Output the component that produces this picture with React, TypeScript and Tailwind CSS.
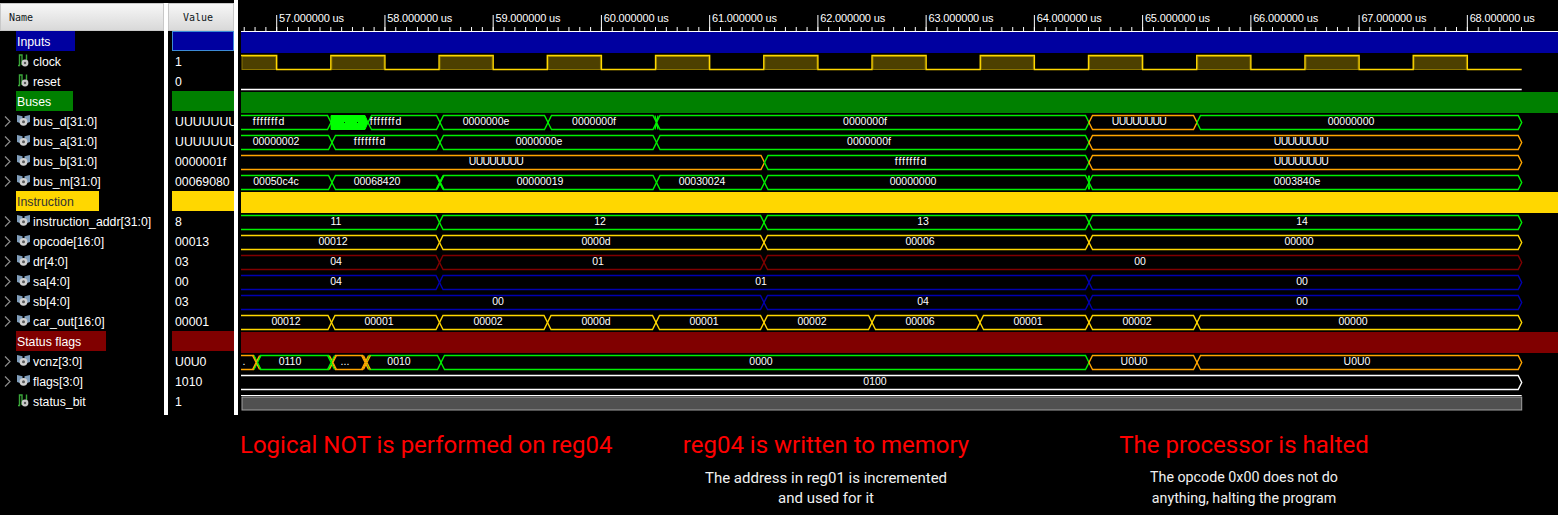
const GREEN = '#00f000';
const ORANGE = '#ffa500';
const GOLD = '#ffd700';
const DARKRED = '#800000';
const BLUE = '#0000b0';
const WHITE = '#ffffff';
const END = 1521.7;
const START = 241;

type Seg = { to: number; color: string; label: string; lx: number; fill?: boolean };
type Cross = { x: number; color: string; w?: number };
type Row =
  | { type: 'group'; name: string; bg: string; w: string; text: string; selected?: boolean }
  | { type: 'clock'; name: string; value: string }
  | { type: 'low'; name: string; value: string }
  | { type: 'bit'; name: string; value: string }
  | { type: 'bus'; name: string; value: string; segs: Seg[]; thick?: Cross[] };

const rows: Row[] = [
  { type: 'group', name: 'Inputs', bg: 'bg-[#0000a0]', w: 'w-[59px]', text: 'text-white', selected: true },
  { type: 'clock', name: 'clock', value: '1' },
  { type: 'low', name: 'reset', value: '0' },
  { type: 'group', name: 'Buses', bg: 'bg-[#008000]', w: 'w-[57px]', text: 'text-white' },
  {
    type: 'bus', name: 'bus_d[31:0]', value: 'UUUUUUUU',
    segs: [
      { to: 331, color: GREEN, label: 'fffffffd', lx: 269 },
      { to: 368, color: GREEN, label: '', lx: 0, fill: true },
      { to: 440, color: GREEN, label: 'fffffffd', lx: 386 },
      { to: 548, color: GREEN, label: '0000000e', lx: 486 },
      { to: 656.5, color: GREEN, label: '0000000f', lx: 594 },
      { to: 1089, color: GREEN, label: '0000000f', lx: 865 },
      { to: 1197, color: ORANGE, label: 'UUUUUUUU', lx: 1139 },
      { to: END, color: GREEN, label: '00000000', lx: 1351 },
    ],
    thick: [{ x: 656.5, color: GREEN, w: 1.5 }],
  },
  {
    type: 'bus', name: 'bus_a[31:0]', value: 'UUUUUUUU',
    segs: [
      { to: 332, color: GREEN, label: '00000002', lx: 276 },
      { to: 440, color: GREEN, label: 'fffffffd', lx: 370 },
      { to: 656.5, color: GREEN, label: '0000000e', lx: 539 },
      { to: 1089, color: GREEN, label: '0000000f', lx: 869 },
      { to: END, color: ORANGE, label: 'UUUUUUUU', lx: 1301 },
    ],
  },
  {
    type: 'bus', name: 'bus_b[31:0]', value: '0000001f',
    segs: [
      { to: 764.5, color: ORANGE, label: 'UUUUUUUU', lx: 496 },
      { to: 1089, color: GREEN, label: 'fffffffd', lx: 911 },
      { to: END, color: ORANGE, label: 'UUUUUUUU', lx: 1301 },
    ],
  },
  {
    type: 'bus', name: 'bus_m[31:0]', value: '00069080',
    segs: [
      { to: 332, color: GREEN, label: '00050c4c', lx: 276 },
      { to: 440, color: GREEN, label: '00068420', lx: 377 },
      { to: 656.5, color: GREEN, label: '00000019', lx: 540 },
      { to: 764.5, color: GREEN, label: '00030024', lx: 702 },
      { to: 1089, color: GREEN, label: '00000000', lx: 913 },
      { to: END, color: GREEN, label: '0003840e', lx: 1297 },
    ],
    thick: [{ x: 439.5, color: GREEN }, { x: 440.5, color: GREEN }, { x: 1089, color: GREEN, w: 0.5 }],
  },
  { type: 'group', name: 'Instruction', bg: 'bg-[#ffd700]', w: 'w-[83px]', text: 'text-[#333333]' },
  {
    type: 'bus', name: 'instruction_addr[31:0]', value: '8',
    segs: [
      { to: 439.5, color: GREEN, label: '11', lx: 336 },
      { to: 764, color: GREEN, label: '12', lx: 600 },
      { to: 1089, color: GREEN, label: '13', lx: 923 },
      { to: END, color: GREEN, label: '14', lx: 1302 },
    ],
  },
  {
    type: 'bus', name: 'opcode[16:0]', value: '00013',
    segs: [
      { to: 439.5, color: GOLD, label: '00012', lx: 333 },
      { to: 764, color: GOLD, label: '0000d', lx: 596 },
      { to: 1089, color: GOLD, label: '00006', lx: 920 },
      { to: END, color: GOLD, label: '00000', lx: 1299 },
    ],
  },
  {
    type: 'bus', name: 'dr[4:0]', value: '03',
    segs: [
      { to: 439.5, color: DARKRED, label: '04', lx: 336 },
      { to: 764, color: DARKRED, label: '01', lx: 598 },
      { to: END, color: DARKRED, label: '00', lx: 1140 },
    ],
  },
  {
    type: 'bus', name: 'sa[4:0]', value: '00',
    segs: [
      { to: 439.5, color: BLUE, label: '04', lx: 336 },
      { to: 1089, color: BLUE, label: '01', lx: 761 },
      { to: END, color: BLUE, label: '00', lx: 1302 },
    ],
  },
  {
    type: 'bus', name: 'sb[4:0]', value: '03',
    segs: [
      { to: 764, color: BLUE, label: '00', lx: 498 },
      { to: 1089, color: BLUE, label: '04', lx: 923 },
      { to: END, color: BLUE, label: '00', lx: 1302 },
    ],
  },
  {
    type: 'bus', name: 'car_out[16:0]', value: '00001',
    segs: [
      { to: 331.5, color: GOLD, label: '00012', lx: 286 },
      { to: 439.5, color: GOLD, label: '00001', lx: 379 },
      { to: 547.5, color: GOLD, label: '00002', lx: 488 },
      { to: 656, color: GOLD, label: '0000d', lx: 596 },
      { to: 764, color: GOLD, label: '00001', lx: 704 },
      { to: 872, color: GOLD, label: '00002', lx: 812 },
      { to: 980, color: GOLD, label: '00006', lx: 920 },
      { to: 1089, color: GOLD, label: '00001', lx: 1028 },
      { to: 1197, color: GOLD, label: '00002', lx: 1137 },
      { to: END, color: GOLD, label: '00000', lx: 1353 },
    ],
  },
  { type: 'group', name: 'Status flags', bg: 'bg-[#800000]', w: 'w-[90px]', text: 'text-white' },
  {
    type: 'bus', name: 'vcnz[3:0]', value: 'U0U0',
    segs: [
      { to: 257, color: ORANGE, label: '.', lx: 244 },
      { to: 332, color: GREEN, label: '0110', lx: 290 },
      { to: 366, color: ORANGE, label: '...', lx: 345 },
      { to: 441, color: GREEN, label: '0010', lx: 399 },
      { to: 1089, color: GREEN, label: '0000', lx: 761 },
      { to: 1197, color: ORANGE, label: 'U0U0', lx: 1134 },
      { to: END, color: ORANGE, label: 'U0U0', lx: 1357 },
    ],
    thick: [
      { x: 257.5, color: GREEN }, { x: 256, color: ORANGE },
      { x: 333, color: ORANGE }, { x: 331, color: GREEN },
      { x: 367, color: ORANGE }, { x: 365, color: ORANGE },
    ],
  },
  {
    type: 'bus', name: 'flags[3:0]', value: '1010',
    segs: [{ to: END, color: WHITE, label: '0100', lx: 875 }],
  },
  { type: 'bit', name: 'status_bit', value: '1' },
];

const TOP = 4.5;
const BOT = 18.5;
const MID = 11.5;

function Chevron() {
  return (
    <svg width="7" height="11" viewBox="0 0 7 11" className="block">
      <path d="M1 0.5 L6 5.5 L1 10.5" fill="none" stroke="#8c8c8c" strokeWidth="1.2" />
    </svg>
  );
}

function BusIcon() {
  return (
    <svg width="13" height="11" viewBox="0 0 13 11" className="block">
      <path d="M0 0 L5.5 1.2 L5.5 5 L3 8 L0 7 Z" fill="#7f9dbb" />
      <path d="M13 0 L7.5 1.2 L7.5 5 L10 8 L13 7 Z" fill="#7f9dbb" />
      <circle cx="6.5" cy="6.8" r="3.9" fill="#cfcfcf" />
      <circle cx="6.5" cy="6.8" r="1.5" fill="#5a5a5a" />
    </svg>
  );
}

function SignalIcon() {
  return (
    <svg width="11" height="13" viewBox="0 0 11 13" className="block ml-px">
      <path d="M0 11.5 H1.5 V1 H4 V11" fill="none" stroke="#3aa63a" strokeWidth="1.4" />
      <path d="M8.5 0.5 V6" fill="none" stroke="#3aa63a" strokeWidth="1.4" />
      <circle cx="7" cy="9" r="3.4" fill="#c8c8c8" />
      <circle cx="7" cy="9" r="1.2" fill="#555555" />
    </svg>
  );
}

function NameCell({ row }: { row: Row }) {
  if (row.type === 'group') {
    return (
      <div className="h-5 pl-4">
        <div className={`h-5 ${row.w} ${row.bg} ${row.text} pl-px text-[12.3px] leading-[22px]`}>{row.name}</div>
      </div>
    );
  }
  return (
    <div className="h-5 flex items-center text-white text-[12.3px]">
      <div className="w-[17px] pl-1 shrink-0">{row.type === 'bus' && <Chevron />}</div>
      <div className="w-4 shrink-0 -mt-[2px]">{row.type === 'bus' ? <BusIcon /> : <SignalIcon />}</div>
      <span className="whitespace-nowrap pt-[2px]">{row.name}</span>
    </div>
  );
}

function ValueCell({ row }: { row: Row }) {
  if (row.type === 'group') {
    return <div className={`h-5 ${row.bg} ${row.selected ? 'border border-[#3c8ad6]' : ''}`} />;
  }
  return <div className="h-5 pl-[3px] text-white text-[12.3px] leading-[22px] whitespace-nowrap overflow-hidden">{row.value}</div>;
}

function labelClass(label: string) {
  if (/^f+d$/.test(label)) return 'fill-white text-[10.5px] tracking-[0.9px]';
  if (/^U+$/.test(label)) return 'fill-white text-[10.5px] tracking-[-0.8px]';
  return 'fill-white text-[10.5px]';
}

function BusWave({ segs, thick }: { segs: Seg[]; thick?: Cross[] }) {
  let from = START;
  const shapes = segs.map((s, i) => {
    const path =
      i === 0
        ? `M${from},${TOP} L${s.to - 3.5},${TOP} L${s.to},${MID} L${s.to - 3.5},${BOT} L${from},${BOT}`
        : `M${from + 3.5},${BOT} L${from},${MID} L${from + 3.5},${TOP} L${s.to - 3.5},${TOP} L${s.to},${MID} L${s.to - 3.5},${BOT} Z`;
    const blockFrom = from;
    from = s.to;
    if (s.fill) {
      return (
        <g key={i}>
          <path
            d={`M${blockFrom},${TOP} L${s.to - 3},${TOP} L${s.to},${MID} L${s.to - 3},${BOT} L${blockFrom},${BOT} Z`}
            fill="#00ff00"
            stroke="#00ff00"
            strokeWidth="1"
          />
          <rect x={344} y={11} width={1} height={1} fill="#003000" />
          <rect x={357} y={11} width={1} height={1} fill="#003000" />
        </g>
      );
    }
    return (
      <g key={i}>
        <path d={path} fill="none" stroke={s.color} strokeWidth="1.4" />
        {s.label && (
          <text x={s.lx} y={13.5} textAnchor="middle" className={labelClass(s.label)}>
            {s.label}
          </text>
        )}
      </g>
    );
  });
  return (
    <>
      {shapes}
      {thick?.map((c, i) => {
        const w = c.w ?? 3.5;
        return (
          <path
            key={i}
            d={`M${c.x - w},${TOP} L${c.x + w},${BOT} M${c.x + w},${TOP} L${c.x - w},${BOT}`}
            stroke={c.color}
            strokeWidth="1.2"
            fill="none"
          />
        );
      })}
    </>
  );
}

function ClockWave() {
  const pulses: [number, number][] = [[START, 276.7]];
  for (let k = 0; k < 11; k++) {
    const start = 276.7 + 108.24 * (k + 0.5);
    pulses.push([start, start + 54.12]);
  }
  let d = `M${START},${TOP}`;
  pulses.forEach(([a, b], i) => {
    d += i === 0 ? ` L${b},${TOP} L${b},${BOT}` : ` L${a},${BOT} L${a},${TOP} L${b},${TOP} L${b},${BOT}`;
  });
  d += ` L${END},${BOT}`;
  return (
    <>
      {pulses.map(([a, b], i) => (
        <rect key={i} x={a + 1} y={TOP + 1} width={b - a - 2} height={BOT - TOP - 1} fill="#4d4000" stroke="#8a7400" strokeWidth="1" />
      ))}
      <path d={d} fill="none" stroke={GOLD} strokeWidth="1.4" />
    </>
  );
}

function WaveRow({ row }: { row: Row }) {
  if (row.type === 'group') {
    return (
      <div className="h-5 pl-[3px] pt-px">
        <div className={`h-[21px] ${row.bg}`} />
      </div>
    );
  }
  return (
    <svg width="1320" height="20" viewBox="238 0 1320 20" className="block overflow-visible relative font-['Liberation_Sans']">
      {row.type === 'clock' && <ClockWave />}
      {row.type === 'low' && <path d={`M${START},${BOT} L${END},${BOT}`} stroke={WHITE} strokeWidth="1.4" />}
      {row.type === 'bit' && (
        <>
          <path d={`M${START},4.5 L${END},4.5`} stroke={WHITE} strokeWidth="1" />
          <rect x={START + 1} y={6} width={END - START - 1} height={13} fill="#505050" stroke="#a0a0a0" strokeWidth="1" />
        </>
      )}
      {row.type === 'bus' && <BusWave segs={row.segs} thick={row.thick} />}
    </svg>
  );
}

function Ruler() {
  const minors = [];
  for (let k = -3; k <= 115; k++) minors.push(276.7 + k * 10.824);
  const majors = [];
  for (let n = 57; n <= 68; n++) majors.push(n);
  return (
    <svg width="1320" height="31" viewBox="238 0 1320 31" className="block overflow-visible font-['Liberation_Sans']">
      <path d={`M241,31.5 L1558,31.5`} stroke={WHITE} strokeWidth="1" />
      {minors.map((x) => (
        <path key={x} d={`M${x},27 L${x},31`} stroke={WHITE} strokeWidth="1" />
      ))}
      {majors.map((n) => {
        const x = 276.7 + (n - 57) * 108.24;
        return (
          <g key={n}>
            <path d={`M${x},15 L${x},31`} stroke={WHITE} strokeWidth="1" />
            <text x={x + 2.3} y={22} className="fill-white text-[11px] tracking-[-0.15px]">
              {n}.000000 us
            </text>
          </g>
        );
      })}
    </svg>
  );
}

function HeaderCell({ label, pad }: { label: string; pad: string }) {
  return (
    <div className={`h-[28px] ${pad} flex items-center bg-gradient-to-b from-[#f7f7f7] to-[#d9d9d9] border border-[#c8c8c8] font-['DejaVu_Sans_Mono'] text-[10px] text-[#101820]`}>
      {label}
    </div>
  );
}

export default function App() {
  return (
    <div className="w-[1558px] h-[515px] bg-black overflow-hidden font-['Liberation_Sans']">
      <div className="flex h-[415px]">
        <div className="w-[168px] shrink-0 pt-[3px]">
          <div className="border-r-4 border-white h-full">
            <HeaderCell label="Name" pad="pl-2" />
            {rows.map((r) => (
              <NameCell key={r.name} row={r} />
            ))}
          </div>
        </div>
        <div className="w-[70px] shrink-0 border-r-4 border-white">
          <div className="h-[3px]" />
          <HeaderCell label="Value" pad="pl-[14px]" />
          <div className="pl-1">
            {rows.map((r) => (
              <ValueCell key={r.name} row={r} />
            ))}
          </div>
        </div>
        <div className="flex-1 min-w-0">
          <Ruler />
          {rows.map((r) => (
            <WaveRow key={r.name} row={r} />
          ))}
        </div>
      </div>
      <div className="flex pl-[240px] pt-[13px] font-['Roboto'] text-center">
        <div className="w-[372px] text-[24px] leading-[34px] text-[#ff0000] whitespace-nowrap">Logical NOT is performed on reg04</div>
        <div className="w-[400px] ml-[14px]">
          <div className="text-[24px] leading-[34px] text-[#ff0000] whitespace-nowrap">reg04 is written to memory</div>
          <div className="mt-[6px] text-[15px] leading-5 text-[#f0f0f0]">
            The address in reg01 is incremented
            <br />
            and used for it
          </div>
        </div>
        <div className="w-[400px] ml-[18px]">
          <div className="text-[24px] leading-[34px] text-[#ff0000] whitespace-nowrap">The processor is halted</div>
          <div className="mt-[5px] text-[14.25px] leading-[21px] text-[#f0f0f0]">
            The opcode 0x00 does not do
            <br />
            anything, halting the program
          </div>
        </div>
      </div>
    </div>
  );
}
